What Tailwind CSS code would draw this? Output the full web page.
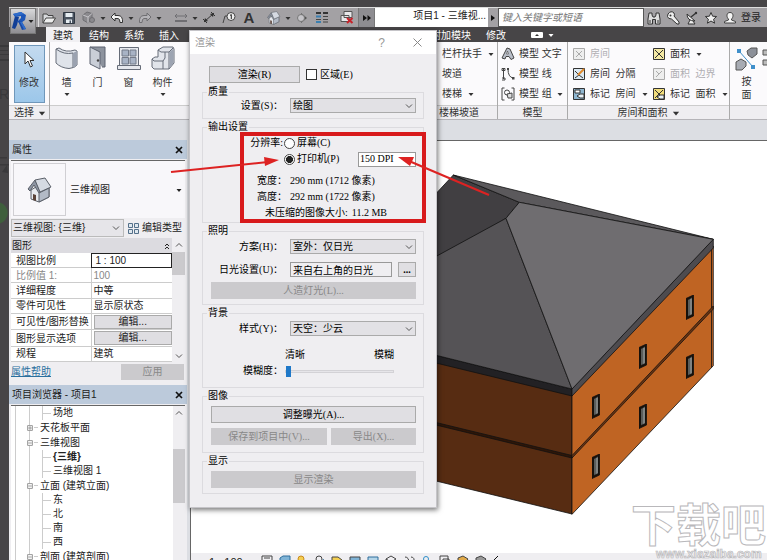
<!DOCTYPE html>
<html lang="zh-CN">
<head>
  <meta charset="UTF-8" />
  <meta name="viewport" content="width=device-width, initial-scale=1" />
  <title>项目1 - 三维视图</title>
  <script src="https://cdn.jsdelivr.net/npm/@tailwindcss/browser@4"></script>
</head>
<body class="relative h-screen overflow-hidden bg-[#474547] pt-[7px] pl-[9px] font-['Liberation_Sans','Noto_Sans_CJK_SC',sans-serif] text-[10px] leading-[14px] text-[#222]">
  <!-- Shared icons -->
  <svg class="hidden">
    <symbol id="caret" viewBox="0 0 8 8"><path d="M1.5 3h5L4 6z" fill="currentColor" /></symbol>
    <symbol id="chevron" viewBox="0 0 8 8"><path d="M1 2.5l3 3 3-3" fill="none" stroke="#555" /></symbol>
    <symbol id="close" viewBox="0 0 8 8"><path d="M1 1l6 6M7 1L1 7" stroke="#111" stroke-width="1.7" /></symbol>
    <symbol id="house" viewBox="0 0 26 26">
      <path d="M4 13v9l8 3 10-5v-9l-5-6z" fill="#e6e9ee" stroke="#5a5f68" />
      <path d="M12 16v9l10-5v-9z" fill="#b3bac6" stroke="#5a5f68" />
      <path d="M1 12L8 3l5 11 -1 2-5-8-4 6z" fill="#8d95a3" stroke="#5a5f68" />
      <path d="M8 3l10-2 6 9-11 5z" fill="#d5dae2" stroke="#5a5f68" />
      <path d="M6 17l3 1v6l-3-1z" fill="#5a4238" />
    </symbol>
    <symbol id="window" viewBox="0 0 8 25">
      <path d="M0 3.5L7.5 0v21L0 24.5z" fill="#1c1108" />
      <path d="M2 4.5L6 2.7v17L2 21.5z" fill="#8b8f8c" />
      <path d="M4 3.6l2-1v17l-2 1z" fill="#c9cdca" />
    </symbol>
  </svg>

  <div class="flex h-full flex-col bg-[#dcdee3]">
    <!-- Quick access bar -->
    <header class="relative flex h-5 shrink-0 items-stretch border-t border-[#ddd] bg-[#a3a1a4]">
      <button aria-label="应用程序菜单" class="absolute top-0 left-px z-10 flex h-[26px] w-[26px] items-center border border-[#777] bg-linear-to-b from-[#d8d8da] to-[#8f8e92]">
        <svg viewBox="0 0 16 20" class="h-[20px] w-4 shrink-0">
          <path d="M4 5L8 6 6 14l-2 4-3-1z" fill="#123f96" />
          <path d="M2 3l8-2 5 3-1 5-4 3-4-1 4-4V5L4 6z" fill="#1d56b8" />
          <path d="M2 3l8-2 3 2-8 2z" fill="#2f6ccb" />
          <path d="M7 10l4 1 4 7-4 1z" fill="#1a4aa6" />
          <path d="M11 11l4 7-2 .5L9 11z" fill="#2f6ccb" />
        </svg>
        <svg class="h-2 w-2 shrink-0"><use href="#caret" /></svg>
      </button>
      <div class="ml-[29px] flex shrink-0 items-center border-l border-[#ddd] pr-px text-[#333]">
        <button aria-label="打开" class="flex w-5 justify-center"><svg viewBox="0 0 14 12" class="h-3 w-3.5"><path d="M1 11V2h4l1 1.500h5V6" fill="#d9dadd" stroke="#444" /><path d="M1 11l3-5h9.500l-3 5z" fill="#eee" stroke="#444" /></svg></button>
        <button aria-label="保存" class="flex w-5 justify-center"><svg viewBox="0 0 12 12" class="h-3 w-3"><path d="M.5.5h11v11H.5z" fill="#4a5360" stroke="#2f3742" /><path d="M2.500 1h7v4h-7zM3 7.500h6V11H3z" fill="#e6edf2" /><path d="M6.500 8.500h1.500V11H6.500z" fill="#4a5360" /></svg></button>
        <button aria-label="同步" class="flex w-5 justify-center"><svg viewBox="0 0 14 13" class="h-[13px] w-3.5"><path d="M1 4l4-3 5 1.500v6L6 12 1 9z" fill="#8b8a8e" stroke="#6f6e72" /><path d="M1 4l5 2 4-3.500M6 6v6" fill="none" stroke="#c5c4c8" /><circle cx="10" cy="9" r="2.500" fill="#8b8a8e" stroke="#6f6e72" /></svg></button>
        <svg class="h-2 w-2"><use href="#caret" /></svg>
        <button aria-label="放弃" class="flex w-5 justify-center"><svg viewBox="0 0 14 12" class="h-3 w-3.5"><path d="M5 1L1 5l4 4V6.500h3q2 0 2 4h2.500q.5-7-4.500-7H5z" fill="#f4f4f4" stroke="#333" /></svg></button>
        <svg class="h-2 w-2"><use href="#caret" /></svg>
        <button aria-label="重做" class="flex w-5 justify-center"><svg viewBox="0 0 14 12" class="h-3 w-3.5"><path d="M9 1l4 4-4 4V6.500H6q-2 0-2 4H1.500Q1 3.500 6 3.500h3z" fill="#b5b4b8" stroke="#6f6e72" /></svg></button>
        <svg class="h-2 w-2"><use href="#caret" /></svg>
        <button aria-label="测量" class="ml-2 flex w-5 justify-center"><svg viewBox="0 0 14 10" class="h-2.5 w-3.5" fill="none" stroke="#6f6e72"><path d="M1 3h12M3 1L1 3l2 2M11 1l2 2-2 2" /><path d="M1 8h12" stroke-width="2" /></svg></button>
        <svg class="h-2 w-2"><use href="#caret" /></svg>
        <button aria-label="对齐尺寸标注" class="flex w-5 justify-center"><svg viewBox="0 0 14 13" class="h-[13px] w-3.5"><path d="M2 11L12 2M1 8l4 4M9 1l4 4" stroke="#333" fill="none" /><path d="M2 11l1-4 3 3zM12 2L8 3l3 3z" fill="#333" /></svg></button>
        <button aria-label="按类别标记" class="flex w-5 justify-center"><svg viewBox="0 0 14 12" class="h-3 w-3.5"><path d="M1 11l2-7h3" fill="none" stroke="#444" /><circle cx="9" cy="4.500" r="4" fill="#eee" stroke="#444" /><path d="M8 3.500L9.300 2.500v4.500" stroke="#222" fill="none" /></svg></button>
        <button aria-label="文字" class="w-5 text-center text-[15px] leading-[15px] font-bold">A</button>
        <button aria-label="默认三维视图" class="ml-[5px] flex w-5 justify-center"><svg class="h-[14px] w-[14px]"><use href="#house" /></svg></button>
        <svg class="h-2 w-2"><use href="#caret" /></svg>
        <button aria-label="剖面" class="flex w-5 justify-center"><svg viewBox="0 0 12 12" class="h-3 w-3"><path d="M5 1l6 5-6 5z" fill="#555" /><circle cx="5" cy="6" r="3.500" fill="#c5c4c8" stroke="#777" /></svg></button>
        <button aria-label="细线" class="flex w-5 justify-center"><svg viewBox="0 0 14 13" class="h-[13px] w-3.5" fill="none"><path d="M1 2h5M8 2h5" stroke="#333" stroke-width="2" /><path d="M1 5.500h5M1 11h5" stroke="#3a7fb0" stroke-width="2" /><path d="M8 5.500h5M1 8.500h5M8 8.500h5M8 11h5" stroke="#444" /></svg></button>
        <button aria-label="关闭隐藏窗口" class="ml-[5px] flex w-5 justify-center"><svg viewBox="0 0 14 13" class="h-[13px] w-3.5"><path d="M4 .5h8v6H4zM1 4.500h8v6H1z" fill="#e8e8ea" stroke="#555" /><path d="M7 7l5.500 5M12.500 7L7 12" stroke="#c8232b" stroke-width="2" /></svg></button>
      </div>
      <button aria-label="自定义快速访问工具栏" class="flex w-[17px] shrink-0 items-center justify-center border-x border-[#777] bg-[#8e8d91]"><svg viewBox="0 0 8 6" class="h-1.5 w-2"><path d="M0 0l4 3-4 3zM4.500 0l3.500 3-3.500 3z" fill="#111" /></svg></button>
      <h1 class="min-w-0 flex-1 truncate bg-white pr-0.5 text-right leading-[16px]">项目1 - 三维视...</h1>
      <button aria-label="展开搜索" class="flex w-2.5 shrink-0 items-center justify-center"><svg viewBox="0 0 4 6" class="h-1.5 w-1"><path d="M0 0l4 3-4 3z" fill="#111" /></svg></button>
      <input type="search" aria-label="搜索" placeholder="键入关键字或短语" class="w-[146px] shrink-0 border border-[#555] bg-white px-[3px] italic placeholder:text-[#777]" />
      <div class="flex w-[123px] shrink-0 items-center">
        <button aria-label="查找" class="flex w-[19px] justify-center"><svg viewBox="0 0 14 14" class="h-3.5 w-3.5"><path d="M2 2h3v2l1 2h2l1-2V2h3l1 6v5H8.500V8.500h-3V13H1V8z" fill="#ddd" stroke="#333" /><path d="M3 9v3M11 9v3" stroke="#333" /></svg></button>
        <button aria-label="速博" class="flex w-[19px] justify-center"><svg viewBox="0 0 14 14" class="h-3.5 w-3.5"><path d="M2 3q3-4 6-1 1 2 0 3l5 6v2h-2L5.500 8Q2 8 1.500 5.500z" fill="#eee" stroke="#333" /><circle cx="4.500" cy="4.500" r="1" fill="#333" /></svg></button>
        <button aria-label="通讯中心" class="flex w-[19px] justify-center"><svg viewBox="0 0 14 14" class="h-3.5 w-3.5"><path d="M2 3q0 7 8 7zM5 9l-2 4h7l-2-3" fill="#eee" stroke="#333" /><path d="M6 6l5-4" stroke="#333" stroke-width="1.500" /><circle cx="11" cy="2" r="1.200" fill="#333" /></svg></button>
        <button aria-label="收藏夹" class="flex w-[19px] justify-center"><svg viewBox="0 0 14 14" class="h-3.5 w-3.5"><path d="M7 1.500l1.600 3.700 4 .3-3 2.700 1 4L7 10l-3.600 2.200 1-4-3-2.700 4-.3z" fill="#eee" stroke="#333" /></svg></button>
        <button class="flex items-center gap-1 pl-[3px]"><svg viewBox="0 0 14 14" class="h-3.5 w-3.5"><path d="M7 1.500c4 0 3.500 5 1.500 6.500v1l4 1.500V12h-11v-1.500l4-1.500V8C3.500 6.500 3 1.500 7 1.500z" fill="#f4f4f4" stroke="#444" /></svg>登录</button>
      </div>
    </header>

    <!-- Ribbon tabs -->
    <nav class="flex h-[15px] shrink-0 gap-[15px] bg-[#474547] pl-[37px] leading-[17px] whitespace-nowrap text-white">
      <a href="#" class="-mr-1.5 bg-[#f1f0f3] px-[7px] text-[#222]">建筑</a>
      <a href="#">结构</a>
      <a href="#">系统</a>
      <a href="#">插入</a>
      <a href="#" class="ml-auto">附加模块</a>
      <a href="#">修改</a>
      <button aria-label="最小化功能区" class="mr-[212px] ml-2.5 flex h-full items-center gap-1"><svg viewBox="0 0 12 6" class="h-1.5 w-3"><rect width="12" height="6" rx="1" fill="#fff" /><path d="M4 4l2-2 2 2z" fill="#333" /></svg><svg class="h-2 w-2"><use href="#caret" /></svg></button>
    </nav>

    <!-- Ribbon panels -->
    <div class="flex h-[78px] shrink-0 border-b border-[#b5b4b8] bg-[#fbfafc] whitespace-nowrap text-[#333]">
      <section class="flex w-[41px] shrink-0 flex-col border-r border-[#aaa]">
        <div class="flex flex-1 justify-center pt-[3px]">
          <button class="flex h-[58px] w-[31px] flex-col items-center gap-2 border border-[#6f97ba] bg-linear-to-b from-[#c3daef] to-[#9cc7ea] pt-[5px]">
            <svg viewBox="0 0 11 17" class="h-[17px] w-[11px]"><path d="M1 1v12l3-3 2.500 6 2-1L6 9.500h4z" fill="#fff" stroke="#333" /></svg>
            修改
          </button>
        </div>
        <h2 class="flex h-[14px] items-center gap-1 border-t border-[#ccc] bg-[#efeef1] pl-[5px]">选择 <svg class="h-2 w-2 scale-125"><use href="#caret" /></svg></h2>
      </section>
      <section class="flex min-w-0 flex-1 flex-col border-r border-[#aaa]">
        <div class="flex flex-1 pt-1 pl-px">
          <button class="flex w-[31px] flex-col items-center">
            <svg viewBox="0 0 24 24" class="h-6 w-6"><path d="M1 3l3-1q7 5 16 2l2 1v14q-2 3-8 3.500Q6 22 1 17z" fill="#dfe3ea" stroke="#666c78" /><path d="M1 3q8 6 17 4v15" fill="none" stroke="#666c78" /><path d="M18 7l4-2v14l-4 3z" fill="#9ba2b0" /></svg>
            <span class="mt-1.5">墙</span><svg class="h-2 w-2"><use href="#caret" /></svg>
          </button>
          <button class="flex w-[31px] flex-col items-center">
            <svg viewBox="0 0 20 24" class="h-6 w-5"><path d="M2 1h15v20h-3" fill="#8d939e" stroke="#5d6370" /><path d="M2 1l10 5v17L2 18z" fill="#c9ced7" stroke="#5d6370" /><circle cx="10" cy="14.500" r="1.200" fill="#444" /></svg>
            <span class="mt-1.5">门</span>
          </button>
          <button class="flex w-[31px] flex-col items-center">
            <svg viewBox="0 0 24 24" class="h-6 w-6"><path d="M2.500 1.500h19v18h-19zM.5 19.500h23v4H.5z" fill="#e6e8ed" stroke="#666c78" /><path d="M5 4h6.500v6H5zM13 4h6v6h-6zM5 11.500h6.500V18H5zM13 11.500h6V18h-6z" fill="#a8b3c5" stroke="#737a88" /></svg>
            <span class="mt-1.5">窗</span>
          </button>
          <button class="flex w-[37px] flex-col items-center">
            <svg viewBox="0 0 24 24" class="h-6 w-6"><path d="M1 13l3-2h3V4l5-3h10l1 2v14l-5 6H3l-2-2z" fill="#e1e4ea" stroke="#666c78" /><path d="M7 4l3 2h8l4-4M18 6v17M1 13l2 2h9l2-3V6M12 15v8" fill="none" stroke="#666c78" /><path d="M18.500 6l4-3.500V17l-4 5z" fill="#9da4b2" /></svg>
            <span class="mt-1.5">构件</span><svg class="h-2 w-2"><use href="#caret" /></svg>
          </button>
        </div>
        <div class="h-[14px] border-t border-[#ccc] bg-[#efeef1]"></div>
      </section>
      <section class="flex w-[80px] shrink-0 flex-col border-r border-[#aaa]">
        <div class="flex flex-1 flex-col items-start pt-0.5 pl-6 leading-5">
          <button class="flex items-center gap-[5px]">栏杆扶手 <svg class="h-2 w-2"><use href="#caret" /></svg></button>
          <button>坡道</button>
          <button class="flex items-center gap-[5px]">楼梯 <svg class="h-2 w-2"><use href="#caret" /></svg></button>
        </div>
        <h2 class="h-[14px] border-t border-[#ccc] bg-[#efeef1] pl-[21px] leading-[13px]">楼梯坡道</h2>
      </section>
      <section class="flex w-[70px] shrink-0 flex-col border-r border-[#aaa]">
        <div class="flex flex-1 flex-col items-start pt-0.5 pl-[3px] leading-5">
          <button class="flex items-center gap-1"><svg viewBox="0 0 14 14" class="h-3.5 w-3.5"><path d="M1 11L6 1l3 1 4 9-3 1.500-2-3H5L4 12z" fill="#b9bec8" stroke="#444" /><path d="M5.500 7h2L6.500 4z" fill="#fff" stroke="#444" stroke-width=".6" /></svg>模型 文字</button>
          <button class="flex items-center gap-1"><svg viewBox="0 0 14 14" class="h-3.5 w-3.5"><path d="M2.500 2v10M1 1.500h3v2H1zM1 11h3v2H1M7 2q0 8 5 9" fill="none" stroke="#444" /><path d="M6 1h2v2H6zM11 10h2.500v2.500H11z" fill="#444" /></svg>模型 线</button>
          <button class="flex items-center gap-1"><svg viewBox="0 0 14 14" class="h-3.5 w-3.5" fill="none" stroke="#444"><path d="M3.500 1H1v12h2.500M10.500 1H13v12h-2.500" /><circle cx="6" cy="5.500" r="2.500" /><path d="M6 7l5-1v5H7z" fill="#ddd" /></svg>模型 组 <svg class="h-2 w-2"><use href="#caret" /></svg></button>
        </div>
        <h2 class="h-[14px] border-t border-[#ccc] bg-[#efeef1] text-center leading-[13px]">模型</h2>
      </section>
      <section class="flex w-[162px] shrink-0 flex-col border-r border-[#aaa]">
        <div class="grid flex-1 grid-cols-[80px_1fr] content-start pt-0.5 pl-[5px] leading-5">
          <button disabled class="flex items-center gap-[5px] text-[#b0afb3]"><svg viewBox="0 0 12 12" class="h-3 w-3"><path d="M.5.5h11v11H.5zM3 3l6 6M9 3L3 9" fill="#eee" stroke="#aaa" /></svg>房间</button>
          <button class="flex items-center gap-[5px]"><svg viewBox="0 0 12 12" class="h-3 w-3"><path d="M.5.5h11v11H.5z" fill="#f4e9a4" stroke="#333" /><path d="M2 2l8 8M10 2l-8 8" stroke="#333" /></svg>面积 <svg class="h-2 w-2"><use href="#caret" /></svg></button>
          <button class="flex items-center gap-[5px]"><svg viewBox="0 0 12 12" class="h-3 w-3"><path d="M.5.5h11v11H.5z" fill="#dce9f2" stroke="#333" /><path d="M2 3l4 4M2 10l4-3 4 3" stroke="#333" fill="none" /><path d="M5 7l6-6" stroke="#e08a2c" stroke-width="2" /></svg><span class="whitespace-pre">房间  分隔</span></button>
          <button disabled class="flex items-center gap-[5px] text-[#b0afb3]"><svg viewBox="0 0 12 12" class="h-3 w-3"><path d="M.5.5h11v11H.5zM3 9l6-6M3 3l3 3" fill="#eee" stroke="#aaa" /></svg><span class="whitespace-pre">面积  边界</span></button>
          <button class="flex items-center gap-[5px]"><svg viewBox="0 0 12 12" class="h-3 w-3"><path d="M.5.5h11v11H.5z" fill="#8fb6d0" stroke="#333" /><path d="M2 2h5v3H2z" fill="#fff" stroke="#333" /><path d="M4 8l3-2h4v4H7z" fill="#e8f1f7" stroke="#333" /></svg><span class="whitespace-pre">标记  房间</span> <svg class="h-2 w-2"><use href="#caret" /></svg></button>
          <button class="flex items-center gap-[5px]"><svg viewBox="0 0 12 12" class="h-3 w-3"><path d="M.5.5h11v11H.5z" fill="#f1dd7c" stroke="#333" /><path d="M2 2l8 8M10 2l-8 8" stroke="#333" /><path d="M4 9l3-2h4v4H7z" fill="#e8f1f7" stroke="#333" /></svg><span class="whitespace-pre">标记  面积</span> <svg class="h-2 w-2"><use href="#caret" /></svg></button>
        </div>
        <h2 class="flex h-[14px] items-center justify-center gap-1 border-t border-[#ccc] bg-[#efeef1]">房间和面积 <svg class="h-2 w-2 scale-125"><use href="#caret" /></svg></h2>
      </section>
      <section class="flex w-[37px] shrink-0 flex-col overflow-hidden">
        <div class="flex flex-1 gap-1 pt-[5px] pl-[5px]">
          <button class="flex w-[23px] shrink-0 flex-col items-center leading-[13px]">
            <svg viewBox="0 0 24 24" class="mb-1 h-6 w-6"><path d="M12 4l4-3h6v6l-5 4-4-3z" fill="#8c9099" stroke="#555" /><path d="M1 15l5-3 5 3v4l-4 4H1z" fill="#a7abb3" stroke="#555" /><path d="M4 4l14 16" stroke="#3f8fcb" /><path d="M2 2h4v4H2zM16 18h4v4h-4z" fill="#3f8fcb" /></svg>
            <span>按</span><span>面</span>
          </button>
          <svg viewBox="0 0 6 20" class="mt-0.5 h-5 w-1.5 shrink-0"><path d="M1 1h5v5H1zM1 11h5v5H1z" fill="#bbb" stroke="#555" /></svg>
        </div>
        <div class="h-[14px] border-t border-[#ccc] bg-[#efeef1]"></div>
      </section>
    </div>

    <div class="flex min-h-0 flex-1 pt-5">
      <!-- Palettes -->
      <aside class="flex w-[178px] shrink-0 flex-col bg-[#efeef1]">
        <header class="flex h-[19px] shrink-0 items-center justify-between bg-[#bccadb] pr-1 pl-[3px]">
          <h2>属性</h2>
          <button aria-label="关闭属性"><svg class="h-2 w-2"><use href="#close" /></svg></button>
        </header>
        <div class="mx-0.5 mt-px flex h-[58px] shrink-0 items-center border-t border-[#666] bg-[#f8f7fa] px-0.5">
          <div class="flex h-[53px] w-[53px] items-center justify-center border border-[#d0cfd3]"><svg class="h-[26px] w-[26px]"><use href="#house" /></svg></div>
          <span class="ml-1 flex-1">三维视图</span>
          <svg class="h-2 w-2"><use href="#caret" /></svg>
        </div>
        <div class="mx-0.5 mt-px flex h-[18px] shrink-0">
          <div class="relative w-[113px]">
            <select aria-label="类型" class="h-full w-full appearance-none border border-[#bbb] bg-[#e6e5e9] pl-px"><option>三维视图: {三维}</option></select>
            <svg class="pointer-events-none absolute top-[5px] right-1 h-2 w-2"><use href="#chevron" /></svg>
          </div>
          <button class="flex flex-1 items-center gap-[3px] pl-1 whitespace-nowrap"><svg viewBox="0 0 11 11" class="h-[11px] w-[11px]" fill="#dfe8ef" stroke="#54708a"><path d="M.5.5h4v4h-4zM6.500.5h4v4h-4zM.5 6.500h4v4h-4zM6.500 6.500h4v4h-4z" /></svg>编辑类型</button>
        </div>
        <div class="mx-0.5 mt-px flex h-[124px] shrink-0 overflow-hidden bg-white">
          <div class="w-[161px]">
            <h3 class="flex h-[15px] items-center justify-between bg-[#dcdbe0] pr-0.5 pl-px">图形 <svg viewBox="0 0 6 8" class="h-2 w-1.5" fill="none" stroke="#222"><path d="M1 4l2-2 2 2M1 7l2-2 2 2" /></svg></h3>
            <table class="h-[109px] w-full border-collapse leading-[13px] [&_th]:w-20 [&_th]:pl-[5px] [&_th]:text-left [&_th]:font-normal [&_th]:whitespace-nowrap [&_td]:border-l [&_td]:border-[#ccc] [&_td]:pl-0.5 [&_tr]:border-b [&_tr]:border-[#ccc]">
              <tr><th>视图比例</th><td class="outline outline-[#222] -outline-offset-1"><span class="pl-0.5">1 : 100</span></td></tr>
              <tr class="text-[#888]"><th>比例值 1:</th><td>100</td></tr>
              <tr><th>详细程度</th><td>中等</td></tr>
              <tr><th>零件可见性</th><td>显示原状态</td></tr>
              <tr><th>可见性/图形替换</th><td><button class="block h-[14px] w-full border border-[#aaa] bg-[#dfdee2] leading-3">编辑...</button></td></tr>
              <tr><th>图形显示选项</th><td><button class="block h-[14px] w-full border border-[#aaa] bg-[#dfdee2] leading-3">编辑...</button></td></tr>
              <tr><th>规程</th><td>建筑</td></tr>
            </table>
          </div>
          <div class="flex flex-1 flex-col items-center bg-[#efeef1]">
            <svg class="my-[3px] h-2 w-2 rotate-180"><use href="#chevron" /></svg>
            <div class="h-[23px] w-full bg-[#cbcacd]"></div>
            <svg class="mt-auto mb-0.5 h-2 w-2"><use href="#chevron" /></svg>
          </div>
        </div>
        <div class="mx-0.5 mt-0.5 flex shrink-0 items-center justify-between pb-[5px]">
          <a href="#" class="text-[#2a6f9e] underline">属性帮助</a>
          <button disabled class="mr-px h-4 w-[63px] bg-[#cbcacd] text-[#888]">应用</button>
        </div>
        <header class="flex h-[19px] shrink-0 items-center justify-between bg-[#bccadb] pr-1 pl-[3px]">
          <h2>项目浏览器 - 项目1</h2>
          <button aria-label="关闭项目浏览器"><svg class="h-2 w-2"><use href="#close" /></svg></button>
        </header>
        <div class="mx-0.5 mt-px flex min-h-0 flex-1 border-t border-[#666] bg-white">
          <div class="ml-[4px] flex-1 overflow-hidden border-l border-[#ccc] pl-[13px]">
            <ul class="border-l border-[#ccc] [&_li_li]:flex [&_li_li]:h-[14px] [&_li_li]:items-center [&_li_li]:gap-0.5 [&_ul]:ml-[12px] [&_ul]:border-l [&_ul]:border-[#ccc]">
              <li>
                <ul>
                  <li><i class="w-2 border-t border-[#ccc]"></i>场地</li>
                </ul>
              </li>
              <li>
                <div class="-ml-[3px] flex h-[15px] items-center"><svg viewBox="0 0 5 5" class="h-[6px] w-[6px]"><path d="M.5.5h4v4h-4zM1 2.500h3M2.500 1v3" fill="#fff" stroke="#888" stroke-width=".7" /></svg><i class="mr-0.5 ml-px w-1 border-t border-[#ccc]"></i>天花板平面</div>
              </li>
              <li>
                <div class="-ml-[3px] flex h-[15px] items-center"><svg viewBox="0 0 5 5" class="h-[6px] w-[6px]"><path d="M.5.5h4v4h-4zM1 2.500h3" fill="#fff" stroke="#888" stroke-width=".7" /></svg><i class="mr-0.5 ml-px w-1 border-t border-[#ccc]"></i>三维视图</div>
                <ul>
                  <li class="font-bold"><i class="w-2 border-t border-[#ccc]"></i>{三维}</li>
                  <li><i class="w-2 border-t border-[#ccc]"></i>三维视图 1</li>
                </ul>
              </li>
              <li>
                <div class="-ml-[3px] flex h-[15px] items-center"><svg viewBox="0 0 5 5" class="h-[6px] w-[6px]"><path d="M.5.5h4v4h-4zM1 2.500h3" fill="#fff" stroke="#888" stroke-width=".7" /></svg><i class="mr-0.5 ml-px w-1 border-t border-[#ccc]"></i>立面 (建筑立面)</div>
                <ul>
                  <li><i class="w-2 border-t border-[#ccc]"></i>东</li>
                  <li><i class="w-2 border-t border-[#ccc]"></i>北</li>
                  <li><i class="w-2 border-t border-[#ccc]"></i>南</li>
                  <li><i class="w-2 border-t border-[#ccc]"></i>西</li>
                </ul>
              </li>
              <li>
                <div class="-ml-[3px] flex h-[15px] items-center"><svg viewBox="0 0 5 5" class="h-[6px] w-[6px]"><path d="M.5.5h4v4h-4zM1 2.500h3" fill="#fff" stroke="#888" stroke-width=".7" /></svg><i class="mr-0.5 ml-px w-1 border-t border-[#ccc]"></i>剖面 (建筑剖面)</div>
              </li>
            </ul>
          </div>
          <div class="flex w-3 flex-col items-center bg-[#efeef1]">
            <svg class="mt-[3px] mb-[32px] h-2 w-2 rotate-180"><use href="#chevron" /></svg>
            <div class="h-[54px] w-full bg-[#cbcacd]"></div>
          </div>
        </div>
      </aside>

      <!-- 3D view -->
      <main class="ml-[3px] flex min-w-0 flex-1 flex-col border-t border-l border-[#666] bg-white">
        <svg viewBox="191 141 576 412" preserveAspectRatio="xMinYMin meet" class="min-h-0 w-full flex-1" stroke="#111" stroke-width=".8" stroke-linejoin="round">
          <path d="M300 448l272 66V395L300 328z" fill="#572c12" />
          <path d="M572 514.300l141.300-148.600V246L572 395z" fill="#bf6423" />
          <path d="M711.500 249v118.500" />
          <path d="M300 389.500l272 66v2.500l-272-66z" fill="#2e1608" />
          <path d="M572 455.500l141.300-149.500v3L572 458z" fill="#6b3411" />
          <path d="M300 321.500l272 67.500v7l-272-66z" fill="#222124" />
          <path d="M572 389l141.300-149.700v8.700L572 396z" fill="#4d4b4f" />
          <path d="M453.300 175L300 340l206-121.700 13.300-16z" fill="#413f42" />
          <path d="M300 330.500L506 218.300 572 389 300 321.500z" fill="#555356" />
          <path d="M453.300 175l260 64.300-194-37z" fill="#5b595c" />
          <path d="M519.300 202.300l194 37L572 389l-66-170.700z" fill="#6f6d70" />
          <use href="#window" x="686" y="295" width="8" height="25" />
          <use href="#window" x="639" y="344" width="8" height="25" />
          <use href="#window" x="592" y="394" width="8" height="25" />
          <use href="#window" x="686" y="354" width="8" height="25" />
          <use href="#window" x="639" y="404" width="8" height="25" />
          <use href="#window" x="592" y="454" width="8" height="25" />
        </svg>
        <!-- View control bar, cut by the window's bottom edge -->
        <div class="-mb-3 flex h-[19px] shrink-0 items-start bg-[#efeef1] pt-0.5 pl-[18px]">
          <span class="w-[49px] text-[11px]">1 : 100</span>
          <svg viewBox="0 0 252 12" class="h-3 w-[252px]" fill="none" stroke="#444">
            <path d="M4 1h10v9H4zM6 3h6" />
            <path d="M22 3l3-2h7v7l-3 2h-7z" fill="#7fb3d6" stroke="#2f6f9c" />
            <circle cx="43" cy="4" r="3" fill="#f4cf52" stroke="#c98a1e" /><path d="M45 6l4 4" stroke="#b33" />
            <circle cx="61" cy="4" r="3" /><path d="M65 4l3 5" stroke="#2f6f9c" />
            <path d="M74 2h6l4 3-3 5h-7z" fill="#f4cf52" />
            <path d="M92 2h10v8H92z" fill="#7fb3d6" /><path d="M110 2h10v8h-10z" fill="#b5d5e8" stroke="#2f6f9c" />
            <path d="M128 4l5-3 5 3-5 3zM128 4v4" /><path d="M147 2q4 0 4 6M153 2q4 0 3 6" />
            <circle cx="168" cy="4" r="2.500" stroke="#2f8fc9" />
            <path d="M182 1h8v8h-8zM185 4h6v6h-6z" />
            <path d="M200 3l5-2 5 3-4 5-6-1z" fill="#e0a949" /><path d="M218 3l5-2 5 3-4 5-6-1z" fill="#999" />
            <path d="M240 1l-4 4 4 4" stroke="#111" />
          </svg>
        </div>
      </main>
    </div>
  </div>

  <!-- Render dialog -->
  <div role="dialog" aria-labelledby="render-title" class="absolute top-[30px] left-[189px] w-[248px] border border-[#c5c4c8] bg-[#efeef1] pb-[13px] font-['Liberation_Serif','Noto_Sans_CJK_SC',serif] text-black shadow-[1px_2px_5px_#0008]">
    <header class="flex h-[23px] items-center bg-white px-[5px] text-[#999]">
      <h2 id="render-title" class="flex-1">渲染</h2>
      <button class="mr-7 font-['Liberation_Sans'] text-xs">?</button>
      <button aria-label="关闭" class="mr-[9px]"><svg viewBox="0 0 9 9" class="h-[9px] w-[9px]"><path d="M.5.5l8 8M8.500.5l-8 8" stroke="#888" /></svg></button>
    </header>
    <form class="flex flex-col gap-0.5 px-[12px] pt-3 [&_fieldset]:min-w-0 [&_fieldset]:border [&_fieldset]:border-[#dcdbdf] [&_fieldset]:pr-[7px] [&_fieldset]:pl-2 [&_legend]:-ml-1 [&_legend]:px-px [&_legend]:leading-3">
      <div class="flex items-center gap-1.5 pb-px pl-[7px]">
        <button type="button" class="h-[17px] w-[91px] border border-[#aaa] bg-[#e0dfe3]">渲染(R)</button>
        <label class="flex items-center gap-[3px]"><input type="checkbox" class="h-[11px] w-[11px] appearance-none border border-[#333] bg-white" />区域(E)</label>
      </div>
      <fieldset class="pb-[5px]">
        <legend>质量</legend>
        <div class="grid grid-cols-[72px_minmax(0,1fr)] items-center gap-x-[7px]">
          <label for="quality" class="text-right">设置(S)：</label>
          <div class="relative"><select id="quality" class="block h-[15px] w-full appearance-none border border-[#aaa] bg-[#e2e1e5] pl-0.5 leading-[13px]"><option>绘图</option></select><svg class="pointer-events-none absolute top-1 right-[3px] h-2 w-2"><use href="#chevron" /></svg></div>
        </div>
      </fieldset>
      <fieldset class="pt-0.5 pb-px">
        <legend>输出设置</legend>
        <div class="grid grid-cols-[72px_minmax(0,1fr)] gap-x-px leading-4">
          <span class="text-right">分辨率:</span>
          <label class="flex items-center gap-0.5"><input type="radio" name="res" class="h-[11px] w-[11px] appearance-none rounded-full border border-[#444] bg-white" />屏幕(C)</label>
          <div class="col-start-2 flex items-center justify-between">
            <label class="flex items-center gap-0.5"><input type="radio" name="res" checked class="h-[11px] w-[11px] appearance-none rounded-full border border-[#444] bg-white bg-radial from-[#222] from-50% to-transparent to-60%" />打印机(P)</label>
            <input type="text" aria-label="DPI" value="150 DPI" class="h-[15px] w-[58px] border border-[#999] bg-white px-px" />
          </div>
        </div>
        <dl class="mt-1.5 grid grid-cols-[76px_minmax(0,1fr)] gap-x-[3px] leading-4">
          <dt class="text-right">宽度：</dt><dd>290 mm (1712 像素)</dd>
          <dt class="text-right">高度：</dt><dd>292 mm (1722 像素)</dd>
          <div class="col-span-2 flex gap-1 pl-[54px]"><dt>未压缩的图像大小:</dt><dd>11.2 MB</dd></div>
        </dl>
      </fieldset>
      <fieldset class="pt-0.5 pb-[5px]">
        <legend>照明</legend>
        <div class="grid grid-cols-[72px_minmax(0,1fr)] items-center gap-x-[7px] gap-y-2 leading-[13px]">
          <label for="scheme" class="text-right">方案(H)：</label>
          <div class="relative"><select id="scheme" class="block h-[15px] w-full appearance-none border border-[#aaa] bg-[#e2e1e5] pl-0.5"><option>室外：仅日光</option></select><svg class="pointer-events-none absolute top-1 right-[3px] h-2 w-2"><use href="#chevron" /></svg></div>
          <label for="sun" class="text-right whitespace-nowrap">日光设置(U)：</label>
          <div class="flex gap-1.5"><input id="sun" type="text" value="来自右上角的日光" class="h-[15px] min-w-0 flex-1 border border-[#999] px-0.5" /><button type="button" aria-label="日光设置选项" class="h-[15px] w-[18px] shrink-0 border border-[#aaa] bg-[#e0dfe3] leading-[10px] font-bold">...</button></div>
        </div>
        <button type="button" disabled class="mt-[5px] block h-[17px] w-full bg-[#cbcacd] text-[#888]">人造灯光(L)...</button>
      </fieldset>
      <fieldset class="pt-0.5 pb-2">
        <legend>背景</legend>
        <div class="grid grid-cols-[72px_minmax(0,1fr)] items-center gap-x-[7px]">
          <label for="style" class="text-right">样式(Y)：</label>
          <div class="relative"><select id="style" class="block h-[15px] w-full appearance-none border border-[#aaa] bg-[#e2e1e5] pl-0.5 leading-[13px]"><option>天空：少云</option></select><svg class="pointer-events-none absolute top-1 right-[3px] h-2 w-2"><use href="#chevron" /></svg></div>
        </div>
        <div class="mt-3 grid grid-cols-[72px_109px] gap-x-0.5">
          <div class="col-start-2 flex justify-between"><span>清晰</span><span>模糊</span></div>
          <label for="blur" class="pt-px text-right leading-4">模糊度：</label>
          <input id="blur" type="range" value="0" class="mt-2 h-[3px] w-full appearance-none border border-[#d3d2d6] bg-[#e6e5e9] [&::-webkit-slider-thumb]:h-[11px] [&::-webkit-slider-thumb]:w-[5px] [&::-webkit-slider-thumb]:appearance-none [&::-webkit-slider-thumb]:bg-[#1f78c8]" />
        </div>
      </fieldset>
      <fieldset class="pt-1 pb-[7px]">
        <legend>图像</legend>
        <button type="button" class="block h-[17px] w-full border border-[#aaa] bg-[#e0dfe3]">调整曝光(A)...</button>
        <div class="mt-[5px] flex gap-1 text-[#888]">
          <button type="button" disabled class="h-[17px] w-[116px] bg-[#cbcacd]">保存到项目中(V)...</button>
          <button type="button" disabled class="h-[17px] flex-1 bg-[#cbcacd]">导出(X)...</button>
        </div>
      </fieldset>
      <fieldset class="pt-1 pb-[5px]">
        <legend>显示</legend>
        <button type="button" disabled class="block h-[17px] w-full bg-[#cbcacd] text-[#888]">显示渲染</button>
      </fieldset>
    </form>
  </div>

  <!-- Annotations and site mark -->
  <svg viewBox="0 0 767 560" preserveAspectRatio="xMinYMin meet" class="pointer-events-none absolute inset-0 h-full w-full">
    <g fill="#3a393b">
      <path d="M0 45h9v2H0zM0 50h8v1H0zM0 54h9v1H0zM0 59h9v2H0z" />
      <text x="-1" y="99" font-size="14">R</text>
      <path d="M0 157h7v1.500H0zM0 164h9v1.500H0zM2 172l5-7 1 8z" />
    </g>
    <path d="M0 202.500a11 11 0 0 1 0 21z" fill="#3f5f3c" />
    <rect x="242" y="134" width="182" height="87" fill="none" stroke="#d81a1c" stroke-width="4" />
    <path d="M171 172l97-10" stroke="#d22" stroke-width="2" />
    <path d="M279 160l-15-3 1 9z" fill="#d22" />
    <path d="M489 195l-80-34" stroke="#d22" stroke-width="2" />
    <path d="M398 157l16 0-4 9z" fill="#d22" />
    <g fill="#fff" stroke="#b9b8bb" class="font-bold">
      <text x="631" y="542" font-size="45" class="font-['Noto_Sans_CJK_SC']">下载吧</text>
      <text x="656" y="558" font-size="12" stroke-width=".7" fill="#f4f4f4">www.xiazaiba.com</text>
    </g>
  </svg>
</body>
</html>
